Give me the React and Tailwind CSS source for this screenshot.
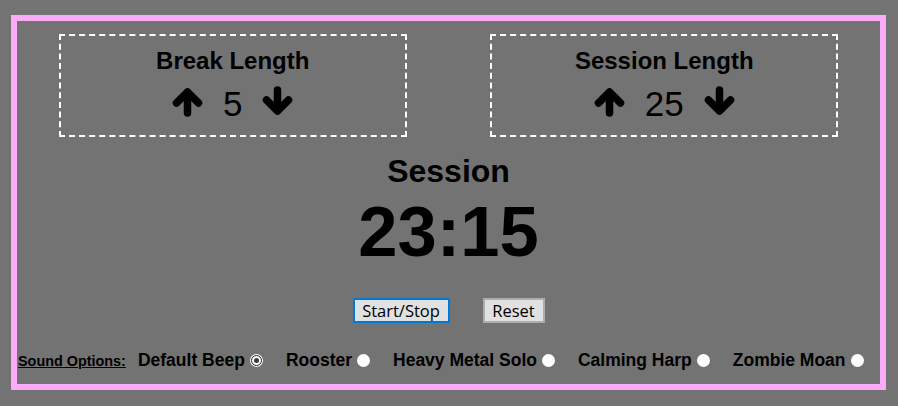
import React from "react";

function ArrowUp({ className = "" }) {
  return (
    <svg width="31" height="29" viewBox="0 0 31 29" className={className} aria-hidden="true">
      <g fill="none" stroke="#000" strokeWidth="7.5" strokeLinecap="round" strokeLinejoin="round">
        <polyline points="4.5,15 15.5,4 26.5,15" />
        <line x1="15.5" y1="6" x2="15.5" y2="25" />
      </g>
    </svg>
  );
}

function ArrowDown({ className = "" }) {
  return (
    <svg width="31" height="29" viewBox="0 0 31 29" className={className} aria-hidden="true">
      <g fill="none" stroke="#000" strokeWidth="7.5" strokeLinecap="round" strokeLinejoin="round">
        <polyline points="4.5,14 15.5,25 26.5,14" />
        <line x1="15.5" y1="4" x2="15.5" y2="23" />
      </g>
    </svg>
  );
}

function LengthBox({ title, value }) {
  return (
    <div className="w-[348px] h-[103px] border-2 border-dashed border-white flex flex-col items-center pt-[11px]">
      <div className="text-[24px] leading-[28px] font-bold text-black">{title}</div>
      <div className="mt-[9px] flex items-center gap-[20px]">
        <ArrowUp className="mb-[4px]" />
        <span className="text-[35px] leading-[40px] text-black">{value}</span>
        <ArrowDown className="mb-[8px]" />
      </div>
    </div>
  );
}

function Radio({ checked }) {
  return (
    <span className="ml-[5px] w-[13px] h-[13px] rounded-full bg-white flex items-center justify-center shrink-0">
      {checked && (
        <span className="w-[11px] h-[11px] rounded-full border-[1.5px] border-[#222] bg-white flex items-center justify-center">
          <span className="w-[5px] h-[5px] rounded-full bg-[#3a3a3a]" />
        </span>
      )}
    </span>
  );
}

const sounds = [
  { name: "Default Beep", checked: true },
  { name: "Rooster", checked: false },
  { name: "Heavy Metal Solo", checked: false },
  { name: "Calming Harp", checked: false },
  { name: "Zombie Moan", checked: false },
];

export default function App() {
  return (
    <div
      className="w-full min-h-screen bg-[#737373] pt-[15px] pl-[11px]"
      style={{ fontFamily: '"Liberation Sans", Arial, sans-serif' }}
    >
      <div className="w-[875px] h-[375px] border-[6px] border-[#fcabf7] flex flex-col">
        <div className="mt-[13px] flex justify-around">
          <LengthBox title="Break Length" value="5" />
          <LengthBox title="Session Length" value="25" />
        </div>

        <div className="mt-[16px] text-center text-[32px] leading-[37px] font-bold text-black">Session</div>
        <div className="text-center text-[70.5px] leading-[83px] font-bold text-black">23:15</div>

        <div
          className="mt-[25px] flex justify-center gap-[33px]"
          style={{ fontFamily: '"Open Sans", "Noto Sans", sans-serif' }}
        >
          <button className="w-[97px] h-[25px] bg-[#e1e1e1] border-2 border-[#0078d7] text-[16.5px] leading-[20px] text-black flex items-center justify-center">
            Start/Stop
          </button>
          <button className="w-[62px] h-[25px] bg-[#e1e1e1] border-2 border-[#adadad] text-[16.5px] leading-[20px] text-black flex items-center justify-center">
            Reset
          </button>
        </div>

        <div className="mt-[27px] pl-[1px] flex items-center h-[20px]">
          <span className="text-[14.4px] font-bold underline text-black pt-[3px] leading-[17px]">Sound Options:</span>
          <div className="ml-[12px] flex items-center gap-[23px]">
            {sounds.map((s) => (
              <label key={s.name} className="flex items-center">
                <span className="text-[17.5px] leading-[20px] font-bold text-black">{s.name}</span>
                <Radio checked={s.checked} />
              </label>
            ))}
          </div>
        </div>
      </div>
    </div>
  );
}
